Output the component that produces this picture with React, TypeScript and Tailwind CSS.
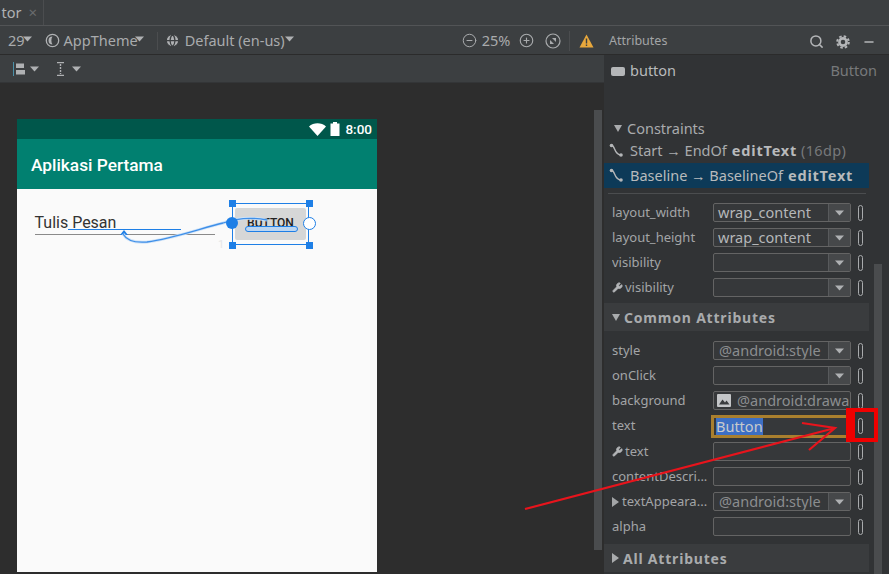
import { Search, Minus, Wrench, Globe, CirclePlus, CircleMinus } from 'lucide-react';
import type { ReactNode } from 'react';

function Caret({ className = '' }: { className?: string }) {
  return (
    <svg width="9" height="6" viewBox="0 0 9 6" className={className}>
      <path d="M0 0.5h9L4.5 5.5z" fill="#afb1b3" />
    </svg>
  );
}

function ConstraintIcon() {
  return (
    <svg width="15" height="15" viewBox="0 0 15 15" className="shrink-0">
      <path d="M2.5 2.5c4 0 2 8 9 9.5" fill="none" stroke="#b4b6b8" strokeWidth="1.4" />
      <circle cx="2.5" cy="2.5" r="1.8" fill="#b4b6b8" />
      <circle cx="12" cy="12" r="1.8" fill="#b4b6b8" />
    </svg>
  );
}

function Pin() {
  return <span className="ml-[7px] h-[16px] w-[5px] shrink-0 rounded-[3px] border border-[#a9abad]" />;
}

function Field({ value, muted, caret, icon }: { value?: string; muted?: boolean; caret?: boolean; icon?: boolean }) {
  return (
    <div className="flex h-[19px] w-[138px] shrink-0 items-center rounded-[2px] border border-[#646464] bg-[#36383a]">
      {icon && (
        <svg width="14" height="13" viewBox="0 0 14 13" className="ml-[3px] shrink-0">
          <rect width="14" height="13" rx="1" fill="#c4c6c8" />
          <path d="M2 10.5l3.5-5 2.5 3 1.5-2 3 4z" fill="#3a3c3e" />
        </svg>
      )}
      <span
        className={`min-w-0 flex-1 whitespace-nowrap text-[14.5px] leading-[17px] ${
          muted ? 'overflow-hidden pl-[5px] text-[#8b8d8f]' : 'pl-[4px] text-[#b5b7b9]'
        } ${muted && caret ? 'mr-[6px]' : ''} ${icon ? 'pl-[6px]' : ''}`}
      >
        {value}
      </span>
      {caret && (
        <span className="flex h-full w-[22px] shrink-0 items-center justify-center border-l border-[#585a5c] bg-[#46484a]">
          <Caret />
        </span>
      )}
    </div>
  );
}

function AttrRow({ label, children, wrench, arrow }: { label: string; children: ReactNode; wrench?: boolean; arrow?: boolean }) {
  return (
    <div className="flex h-[25px] items-center pl-[8px]">
      <div className="flex w-[101px] shrink-0 items-center overflow-hidden whitespace-nowrap text-[#a3a5a7]">
        {wrench && <Wrench size={11} className="mr-[2px] fill-[#b4b6b8] text-[#b4b6b8]" />}
        {arrow && <span className="mr-[3px] h-0 w-0 border-y-[5px] border-l-[7px] border-y-transparent border-l-[#a3a5a7]" />}
        {label}
      </div>
      {children}
      <Pin />
    </div>
  );
}

function SectionHead({ label, open }: { label: string; open?: boolean }) {
  return (
    <div className="flex h-[28px] w-[265px] items-center bg-[#3a3c3e] pl-[8px] text-[14px] font-bold tracking-[0.8px] text-[#a9abad]">
      <span
        className={
          open
            ? 'mr-[4px] h-0 w-0 border-x-[4px] border-t-[7px] border-x-transparent border-t-[#a9abad]'
            : 'mr-[4px] h-0 w-0 border-y-[5px] border-l-[7px] border-y-transparent border-l-[#a9abad]'
        }
      />
      {label}
    </div>
  );
}

export default function App() {
  return (
    <div className="relative h-[574px] w-[889px] overflow-hidden bg-[#3c3f41] font-['Noto_Sans',sans-serif] text-[13px] text-[#a9abad]">
      {/* tab strip */}
      <div className="flex h-[26px] border-b border-[#525456]">
        <div className="flex w-[44px] items-center justify-end border-r border-[#4b4d4f] pr-[6px]">
          <span className="mr-[7px] text-[14.5px] text-[#afb1b3]">tor</span>
          <span className="text-[15px] leading-none text-[#6a6c6e]">×</span>
        </div>
      </div>

      <div className="flex h-[548px]">
        {/* editor column */}
        <div className="flex w-[604px] shrink-0 flex-col">
          <div className="flex h-[29px] shrink-0 items-center border-b border-[#2b2b2b] pt-[1px] text-[14.5px] text-[#a9abad]">
            <span className="ml-[8px]">29</span>
            <Caret className="-ml-[2px] mb-[3px]" />
            <svg width="15" height="15" viewBox="0 0 15 15" className="ml-[13px]">
              <circle cx="7.5" cy="7.5" r="6.2" fill="none" stroke="#afb1b3" strokeWidth="1.3" />
              <path d="M7.5 3.5a4 4 0 0 0 0 8c-1.5-2-1.5-6 0-8z" fill="#afb1b3" />
            </svg>
            <span className="ml-[4px]">AppTheme</span>
            <Caret className="-ml-[3px] mb-[3px]" />
            <span className="ml-[13px] h-[18px] w-px bg-[#4b4d4f]" />
            <Globe size={15} className="ml-[7px] fill-[#afb1b3] text-[#3c3f41]" />
            <span className="ml-[5px]">Default (en-us)</span>
            <Caret className="mb-[3px]" />
            <CircleMinus size={15} className="ml-[168px] text-[#a9abad]" strokeWidth={1.6} />
            <span className="ml-[5px]">25%</span>
            <CirclePlus size={15} className="ml-[9px] text-[#a9abad]" strokeWidth={1.8} />
            <svg width="16" height="16" viewBox="0 0 16 16" className="ml-[11px]">
              <circle cx="8" cy="8" r="7" fill="none" stroke="#a9abad" strokeWidth="1.2" />
              <path d="M5 11V7l4 4zM11 5v4L7 5z" fill="#a9abad" />
            </svg>
            <span className="ml-[8px] h-[20px] w-px bg-[#4b4d4f]" />
            <svg width="15" height="14" viewBox="0 0 15 14" className="ml-[9px]">
              <path d="M7.5 0.5L14.5 13.5H0.5z" fill="#e8a83c" />
              <path d="M6.8 4.5h1.4v5H6.8zM6.8 10.5h1.4v1.5H6.8z" fill="#3c3f41" />
            </svg>
          </div>
          <div className="flex h-[28px] shrink-0 items-center border-b border-[#333537]">
            <svg width="12" height="14" viewBox="0 0 12 14" className="ml-[13px]">
              <rect width="1" height="14" fill="#4a90a8" />
              <rect x="3" y="1.5" width="8" height="4.5" fill="#afb1b3" />
              <rect x="3" y="8" width="11" height="4.5" fill="#afb1b3" />
            </svg>
            <Caret className="ml-[5px]" />
            <svg width="10" height="14" viewBox="0 0 10 14" className="ml-[17px]">
              <path d="M1 0.5h7M1 13.5h7" stroke="#afb1b3" strokeWidth="1.6" />
              <path d="M4.5 2v10" stroke="#afb1b3" strokeWidth="1.4" strokeDasharray="2 1" />
            </svg>
            <Caret className="ml-[6px]" />
          </div>
          {/* canvas */}
          <div className="relative flex-1 bg-[#2d2d2d] pl-[17px] pt-[36px]">
            <div className="w-[360px] overflow-hidden">
              <div className="flex h-[20px] items-center justify-end bg-[#00574b] pr-[5px] font-['Roboto',sans-serif] text-[13.5px] text-white">
                <svg width="17" height="13" viewBox="0 0 17 13">
                  <path d="M0 3.5C4.5-0.7 12.5-0.7 17 3.5L8.5 13z" fill="#fff" />
                </svg>
                <svg width="10" height="14" viewBox="0 0 10 14" className="ml-[4px]">
                  <path d="M3 0h4v1.5h2.5V14H.5V1.5H3z" fill="#fff" />
                </svg>
                <span className="ml-[5px] font-medium">8:00</span>
              </div>
              <div className="flex h-[50px] items-center bg-[#018070] pl-[14px] pt-[3px] font-['Roboto',sans-serif] text-[17.3px] font-medium text-white">
                Aplikasi Pertama
              </div>
              <div className="relative h-[383px] bg-[#fafafa] font-['Roboto',sans-serif]">
                <div className="absolute left-[17.5px] top-[24px] text-[16px] leading-[20px] text-[#333333]">Tulis Pesan</div>
                <div className="absolute left-[18px] top-[45px] h-px w-[180px] bg-[#8a8a8a]" />
                <div className="absolute left-[51px] top-[40px] h-px w-[113px] bg-[#1e7fe6]" />
                <div className="absolute left-[218px] top-[19px] flex h-[32px] w-[71px] items-center justify-center rounded-[2px] bg-[#d6d7d7] pb-[2px] text-[12px] font-medium leading-none text-[#222]">
                  BUTTON
                </div>
                <div className="absolute left-[215px] top-[14px] h-[42px] w-[77px] border border-[#1e7fe6]" />
                <span className="absolute left-[212px] top-[11px] size-[7px] bg-[#1e7fe6]" />
                <span className="absolute left-[289px] top-[11px] size-[7px] bg-[#1e7fe6]" />
                <span className="absolute left-[212px] top-[53px] size-[7px] bg-[#1e7fe6]" />
                <span className="absolute left-[289px] top-[53px] size-[7px] bg-[#1e7fe6]" />
                <span className="absolute left-[201px] top-[50px] text-[11px] leading-none text-[#e6e6e6]">1</span>
                <svg width="240" height="70" viewBox="0 0 240 70" className="absolute left-[60px] top-0">
                  <path d="M43 46l4-5 4 5z" fill="#1e7fe6" />
                  <path d="M46 45C50 52 58 54 70 53C95 50 125 39 146 34C160 29 175 28 190 31" fill="none" stroke="#cfe3f8" strokeWidth="3" />
                  <path d="M46 45C50 52 58 54 70 53C95 50 125 39 146 34C160 29 175 28 190 31" fill="none" stroke="#3f8fe8" strokeWidth="1.3" />
                </svg>
                <span className="absolute left-[209px] top-[28px] size-[12px] rounded-full bg-[#1e7fe6]" />
                <span className="absolute left-[286px] top-[28px] size-[13px] rounded-full border border-[#1e7fe6] bg-white" />
                <span className="absolute left-[228px] top-[37px] h-[6px] w-[53px] rounded-full border border-[#1e7fe6] bg-[#bcd6f2]" />
              </div>
            </div>
            {/* vertical scroll thumb */}
            <div className="absolute right-[2px] top-[27px] h-[440px] w-[8px] bg-[#4a4c4e]" />
          </div>
        </div>

        {/* attributes panel */}
        <div className="relative flex-1 bg-[#313335] text-[13px]">
          <div className="flex h-[29px] items-center justify-between border-b border-[#2b2b2b] bg-[#3c3f41] pl-[5px] pr-[13px] pt-[3px] text-[12.5px] text-[#a3a5a7]">
            <span>Attributes</span>
            <span className="flex items-center">
              <Search size={15} strokeWidth={2.4} className="text-[#b4b6b8]" />
              <svg width="14" height="14" viewBox="0 0 14 14" className="ml-[12px]">
                <circle cx="7" cy="7" r="3.6" fill="none" stroke="#b4b6b8" strokeWidth="2.6" />
                <circle cx="7" cy="7" r="5.8" fill="none" stroke="#b4b6b8" strokeWidth="2" strokeDasharray="2.5 2.05" />
              </svg>
              <Minus size={14} strokeWidth={2.2} className="ml-[12px] text-[#b4b6b8]" />
            </span>
          </div>
          <div className="flex h-[32px] items-center pl-[7px] pr-[12px] text-[14.5px]">
            <span className="h-[9px] w-[14px] rounded-[2px] bg-[#b4b6b8]" />
            <span className="ml-[5px] text-[#b8babc]">button</span>
            <span className="ml-auto text-[#77797b]">Button</span>
          </div>
          <div className="mt-[33px] flex h-[17px] items-center pl-[10px] text-[14.5px] text-[#a9abad]">
            <span className="mr-[5px] h-0 w-0 border-x-[4px] border-t-[7px] border-x-transparent border-t-[#a9abad]" />
            Constraints
          </div>
          <div className="mt-[1px] flex h-[25px] w-[265px] items-center whitespace-pre pl-[5px] text-[14.5px] text-[#a9abad]">
            <ConstraintIcon />
            <span className="ml-[6px]">Start → EndOf</span>
            <b className="ml-[5px] tracking-[0.8px] text-[#b8babc]">editText</b>
            <span className="ml-[4px] tracking-[0.3px] text-[#77797b]">(16dp)</span>
          </div>
          <div className="flex h-[25px] w-[265px] items-center whitespace-pre bg-[#0d3a58] pl-[5px] text-[14.5px] text-[#b8babc]">
            <ConstraintIcon />
            <span className="ml-[6px]">Baseline → BaselineOf</span>
            <b className="ml-[5px] tracking-[0.8px]">editText</b>
          </div>
          <div className="ml-[4px] mt-[5px] h-px w-[258px] bg-[#4b4d4f]" />

          <div className="mt-[6px]">
            <AttrRow label="layout_width"><Field value="wrap_content" caret /></AttrRow>
            <AttrRow label="layout_height"><Field value="wrap_content" caret /></AttrRow>
            <AttrRow label="visibility"><Field caret /></AttrRow>
            <AttrRow label="visibility" wrench><Field caret /></AttrRow>
          </div>
          <div className="mt-[3px]"><SectionHead label="Common Attributes" open /></div>
          <div className="mt-[7px]">
            <AttrRow label="style"><Field value="@android:style" muted caret /></AttrRow>
            <AttrRow label="onClick"><Field caret /></AttrRow>
            <AttrRow label="background"><Field value="@android:drawa" muted icon /></AttrRow>
            <div className="flex h-[26px] items-center pl-[8px]">
              <div className="w-[99px] shrink-0 text-[#a3a5a7]">text</div>
              <div className="flex h-[23px] w-[141px] shrink-0 items-center border-[3px] border-[#a97f2e] bg-[#36383a] pl-[2px] text-[14.5px]">
                <span className="bg-[#3d6fc4] leading-[17px] text-[#c8cacc]">Button</span>
              </div>
              <span className="ml-[6px] h-[16px] w-[5px] shrink-0 rounded-[3px] border border-[#a9abad]" />
            </div>
            <AttrRow label="text" wrench><Field /></AttrRow>
            <AttrRow label="contentDescri..."><Field /></AttrRow>
            <AttrRow label="textAppeara..." arrow><Field value="@android:style" muted caret /></AttrRow>
            <AttrRow label="alpha"><Field /></AttrRow>
          </div>
          <div className="mt-[5px]"><SectionHead label="All Attributes" /></div>
          <div className="absolute right-[7px] top-[238px] bottom-0 w-[8px] bg-[#4a4c4e]" />
        </div>
      </div>

      {/* annotation drawn over the shot */}
      <svg width="889" height="574" viewBox="0 0 889 574" className="pointer-events-none absolute left-0 top-0">
        <path d="M853 410h23v30h-23z" fill="none" stroke="#f00000" strokeWidth="4" />
        <rect x="846" y="408" width="7" height="34" fill="#f00000" />
        <path d="M525 509L835 428M802 423L835 428L809 450" fill="none" stroke="#e8141c" strokeWidth="2.2" />
      </svg>
    </div>
  );
}
